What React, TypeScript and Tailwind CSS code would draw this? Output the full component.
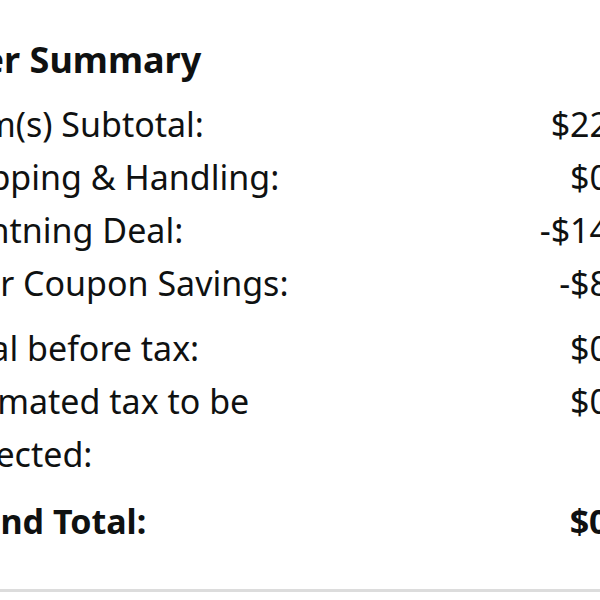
export default function App() {
  const group1 = [
    ["Item(s) Subtotal:", "$22.98"],
    ["Shipping & Handling:", "$0.00"],
    ["Lightning Deal:", "-$14.99"],
    ["Your Coupon Savings:", "-$8.00"],
  ];
  return (
    <div className="w-[600px] h-[600px] overflow-hidden bg-white" style={{ fontFamily: '"Noto Sans", "Open Sans", sans-serif' }}>
      <div className="ml-[-59px] w-[716px] pt-[33px] text-[#0f1111] text-[34px] leading-[53px]">
        <div className="ml-[-25px] font-bold text-[36px]">Order Summary</div>
        <div className="mt-[12px] flex flex-col">
          {group1.map(([l, v]) => (
            <div key={l} className="flex justify-between">
              <span className="w-[370px]">{l}</span>
              <span>{v}</span>
            </div>
          ))}
        </div>
        <div className="mt-[12px] flex flex-col">
          <div className="flex justify-between">
            <span className="w-[370px]">Total before tax:</span>
            <span>$0.00</span>
          </div>
          <div className="flex justify-between items-start">
            <span className="w-[370px]">Estimated tax to be collected:</span>
            <span>$0.00</span>
          </div>
        </div>
        <div className="mt-[14px] flex justify-between font-bold">
          <span>Grand Total:</span>
          <span>$0.00</span>
        </div>
      </div>
      <div className="mt-[41px] h-[3px] w-full bg-[#dcdcdc]" />
    </div>
  );
}
